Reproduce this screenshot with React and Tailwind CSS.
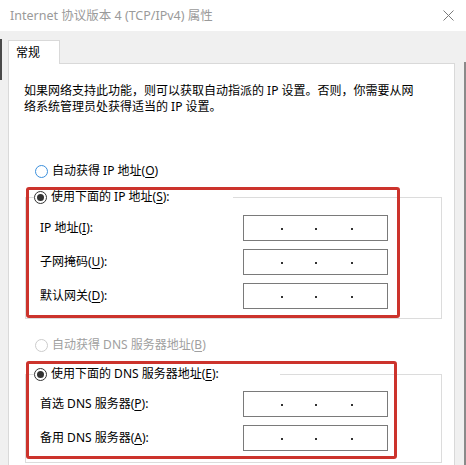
import React from "react";

const font = "font-['Noto_Sans','Noto_Sans_CJK_SC',sans-serif]";

function Radio({ checked, disabled, focus }) {
  let ring = "border-[#333333]";
  if (focus) ring = "border-[#3b8fdc]";
  if (disabled) ring = "border-[#cccccc]";
  return (
    <span className={`w-[13px] h-[13px] rounded-full border bg-white flex items-center justify-center shrink-0 ${ring}`}>
      {checked && <span className="w-[7px] h-[7px] rounded-full bg-[#333333]" />}
    </span>
  );
}

function IpBox() {
  return (
    <div className="w-[145px] h-[26px] border border-[#7a7a7a] bg-white flex items-center pl-[37px] pt-[2px]">
      <span className="w-[2px] h-[2px] bg-[#333]" />
      <span className="w-[2px] h-[2px] bg-[#333] ml-[32px]" />
      <span className="w-[2px] h-[2px] bg-[#333] ml-[34px]" />
    </div>
  );
}

function Field({ label }) {
  return (
    <div className="flex items-center h-[26px]">
      <span className="w-[203px] leading-[16px]">{label}</span>
      <IpBox />
    </div>
  );
}

function U({ children }) {
  return <span className="underline underline-offset-[2px]">{children}</span>;
}

export default function App() {
  return (
    <div className={`w-[466px] h-[465px] overflow-hidden bg-[#f0f0f0] text-[12px] text-black ${font}`}>
      {/* title bar */}
      <div className="h-[31px] bg-white flex items-center justify-between pl-[10px] pr-[12px]">
        <span className="text-[#9a9a9a] text-[12.5px] leading-[16px]">Internet 协议版本 4 (TCP/IPv4) 属性</span>
        <svg width="11" height="11" viewBox="0 0 11 11" className="block">
          <path d="M0.5 0.5 L10.5 10.5 M10.5 0.5 L0.5 10.5" stroke="#7a7a7a" strokeWidth="1" fill="none" />
        </svg>
      </div>

      <div className="flex">
        <div className="w-[2px] mt-[8px] h-[41px] bg-[#4a4a4a]" />
        <div className="flex-1 pl-[6px] pr-[8px] pt-[9px]">
          {/* tab */}
          <div className="relative z-10 w-[52px] h-[24px] bg-white border border-b-0 border-[#d9d9d9] pl-[7px] flex items-center mb-[-1px]">
            <span className="leading-[16px]">常规</span>
          </div>

          {/* panel */}
          <div className="w-[447px] h-[420px] bg-white border border-[#d9d9d9] pl-[15px] pt-[19px]">
            <p className="leading-[16px]">
              如果网络支持此功能，则可以获取自动指派的 IP 设置。否则，你需要从网
              <br />
              络系统管理员处获得适当的 IP 设置。
            </p>

            <div className="mt-[48px] ml-[11px] flex items-center gap-[4px] h-[16px]">
              <Radio focus />
              <span className="leading-[16px]">
                自动获得 IP 地址(<U>O</U>)
              </span>
            </div>

            {/* manual IP group */}
            <div className="relative mt-[10px] ml-[1px] w-[417px]">
              <fieldset className="border border-[#dcdcdc] p-0 m-0">
                <legend className="ml-[8px] w-[199px] h-[16px] bg-white flex items-center gap-[4px] p-0">
                  <Radio checked />
                  <span className="leading-[16px]">
                    使用下面的 IP 地址(<U>S</U>):
                  </span>
                </legend>
                <div className="pl-[14px] pt-[10px] pb-[9px] flex flex-col gap-[8px]">
                  <Field label={<>IP 地址(<U>I</U>):</>} />
                  <Field label={<>子网掩码(<U>U</U>):</>} />
                  <Field label={<>默认网关(<U>D</U>):</>} />
                </div>
              </fieldset>
              <div className="absolute left-[1px] top-[-2px] w-[374px] h-[131px] border-[3px] border-[#cc332c] rounded-[3px]" />
            </div>

            <div className="mt-[18px] ml-[11px] flex items-center gap-[4px] h-[16px] text-[#a0a0a0]">
              <Radio disabled />
              <span className="leading-[16px]">
                自动获得 DNS 服务器地址(<U>B</U>)
              </span>
            </div>

            {/* manual DNS group */}
            <div className="relative mt-[13px] ml-[1px] w-[417px]">
              <fieldset className="border border-[#dcdcdc] p-0 m-0">
                <legend className="ml-[8px] w-[246px] h-[16px] bg-white flex items-center gap-[4px] p-0">
                  <Radio checked />
                  <span className="leading-[16px]">
                    使用下面的 DNS 服务器地址(<U>E</U>):
                  </span>
                </legend>
                <div className="pl-[14px] pt-[9px] pb-[11px] flex flex-col gap-[8px]">
                  <Field label={<>首选 DNS 服务器(<U>P</U>):</>} />
                  <Field label={<>备用 DNS 服务器(<U>A</U>):</>} />
                </div>
              </fieldset>
              <div className="absolute left-[1px] top-[-5px] w-[371px] h-[98px] border-[3px] border-[#cc332c] rounded-[3px]" />
            </div>
          </div>
        </div>
        <div className="w-[2px] mt-[31px] h-[420px] bg-[#8a8a8a]" />
      </div>
    </div>
  );
}
